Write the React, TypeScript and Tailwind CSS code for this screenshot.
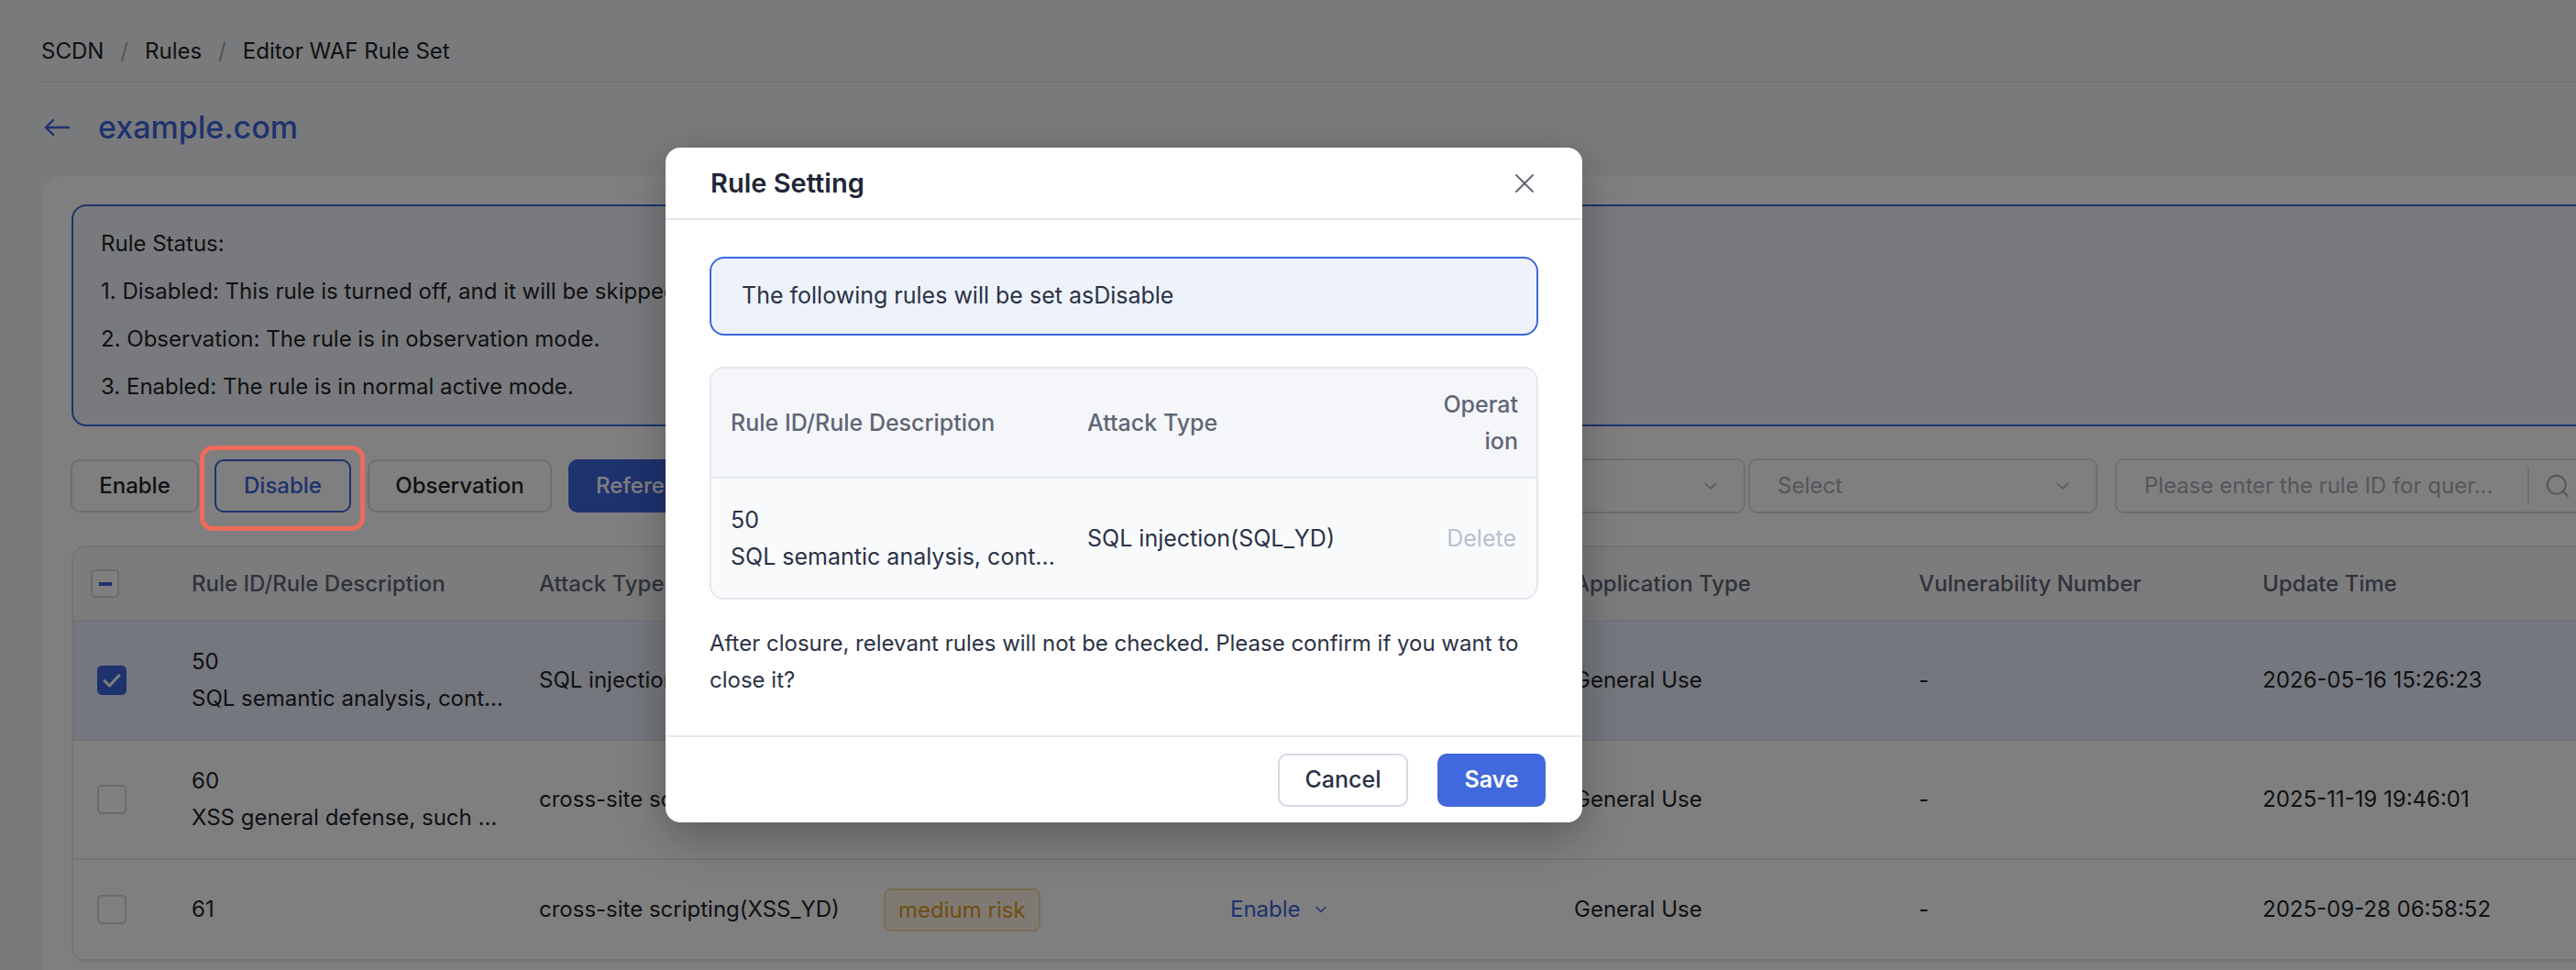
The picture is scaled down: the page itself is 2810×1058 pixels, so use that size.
import React from "react";
import { ChevronDown, Search, X } from "lucide-react";

function Checkbox({ state }: { state: "on" | "off" | "mixed" }) {
  if (state === "on") {
    return (
      <div className="w-[32px] h-[32px] rounded-[5px] bg-[#3d64dd] flex items-center justify-center">
        <svg width="20" height="16" viewBox="0 0 20 16" fill="none">
          <path d="M2 8.5 L7.5 14 L18 2.5" stroke="white" strokeWidth="3" strokeLinecap="round" strokeLinejoin="round" />
        </svg>
      </div>
    );
  }
  if (state === "mixed") {
    return (
      <div className="w-[31px] h-[31px] rounded-[5px] border-2 border-[#d3d6dd] bg-white flex items-center justify-center">
        <div className="w-[14px] h-[4px] bg-[#3d64dd]" />
      </div>
    );
  }
  return <div className="w-[32px] h-[32px] rounded-[5px] border-2 border-[#d3d6dd] bg-white" />;
}

const cols = [
  "w-[379px]",
  "w-[376px]",
  "w-[378px]",
  "w-[375px]",
  "w-[376px]",
  "w-[375px]",
  "w-[380px]",
];

export default function App() {
  return (
    <div className="relative w-[2810px] h-[1058px] overflow-hidden bg-[#f3f4f7] font-['Inter','Noto_Sans',sans-serif] text-[#1f2329]">
      {/* Breadcrumb */}
      <div className="ml-[45px] pt-[40px] pb-[16px] border-b-2 border-[#e0e2e7]">
        <div className="flex items-center h-[32px] text-[24px] leading-[32px] text-[#1f2329]">
          <span>SCDN</span>
          <span className="mx-[18px] text-[#a3a8b3]">/</span>
          <span>Rules</span>
          <span className="mx-[18px] text-[#a3a8b3]">/</span>
          <span>Editor WAF Rule Set</span>
        </div>
      </div>

      {/* Title */}
      <div className="ml-[48px] mt-[25px] h-[48px] flex items-center gap-[31px]">
        <svg width="28" height="20" viewBox="0 0 28 20" fill="none">
          <path d="M27 10 H2 M10 2 L2 10 L10 18" stroke="#3d64dd" strokeWidth="2.4" strokeLinecap="round" strokeLinejoin="round" />
        </svg>
        <span className="text-[34px] leading-[48px] font-medium text-[#3d64dd]">example.com</span>
      </div>

      {/* Card */}
      <div className="ml-[45px] mt-[29px] w-[2838px] h-[900px] bg-white rounded-[24px] pt-[31px] px-[33px]">
        <div className="border-2 border-[#3d64dd] bg-[#f3f5fb] rounded-[16px] px-[30px] py-[15px] text-[24px] leading-[52px] text-[#1f2329]">
          <div>Rule Status:</div>
          <div>1. Disabled: This rule is turned off, and it will be skipped when the request is checked.</div>
          <div>2. Observation: The rule is in observation mode.</div>
          <div>3. Enabled: The rule is in normal active mode.</div>
        </div>

        {/* Toolbar */}
        <div className="mt-[36px] flex items-center h-[58px]">
          <button className="-ml-[1px] w-[140px] h-[58px] rounded-[10px] border-2 border-[#d9dce3] bg-white text-[24px] font-medium text-[#1f2329]">Enable</button>
          <button className="ml-[17px] w-[149px] h-[58px] rounded-[10px] border-2 border-[#3d64dd] bg-white text-[24px] font-medium text-[#3d64dd]">Disable</button>
          <button className="ml-[18px] w-[201px] h-[58px] rounded-[10px] border-2 border-[#d9dce3] bg-white text-[24px] font-medium text-[#1f2329]">Observation</button>
          <button className="ml-[18px] w-[300px] h-[58px] rounded-[10px] bg-[#3d64dd] text-[24px] font-medium text-white text-left pl-[30px]">Reference Rules</button>
          <div className="flex-1" />
          <div className="flex items-center">
            <div className="w-[381px] h-[60px] rounded-[10px] border-2 border-[#d9dce3] bg-white flex items-center justify-between pl-[30px] pr-[24px] text-[24px] text-[#a8adb8]">
              <span>Select</span>
              <ChevronDown size={24} strokeWidth={1.5} className="text-[#a8adb8]" />
            </div>
            <div className="ml-[3px] w-[381px] h-[60px] rounded-[10px] border-2 border-[#d9dce3] bg-white flex items-center justify-between pl-[30px] pr-[24px] text-[24px] text-[#a8adb8]">
              <span>Select</span>
              <ChevronDown size={24} strokeWidth={1.5} className="text-[#a8adb8]" />
            </div>
            <div className="ml-[19px] w-[543px] h-[60px] rounded-[10px] border-2 border-[#d9dce3] bg-white flex items-center pl-[30px] text-[24px] text-[#a8adb8]">
              <span className="w-[410px] truncate">Please enter the rule ID for quer…</span>
              <div className="w-[2px] h-[40px] bg-[#d9dce3] ml-[8px]" />
              <Search size={30} strokeWidth={1.5} className="ml-[16px] text-[#a8adb8]" />
            </div>
          </div>
        </div>

        {/* Table */}
        <div className="mt-[36px] border-2 border-[#e6e8ec] rounded-[16px] overflow-hidden text-[24px]">
          <div className="flex h-[81px] border-b-2 border-[#e6e8ec] bg-[#f8f9fb] items-center font-medium text-[#5f6675]">
            <div className="w-[108px] pl-[19px] flex items-center"><Checkbox state="mixed" /></div>
            <div className={`${cols[0]} pl-[21px]`}>Rule ID/Rule Description</div>
            <div className={`${cols[1]} pl-[21px]`}>Attack Type</div>
            <div className={`${cols[2]} pl-[21px]`}>Risk Level</div>
            <div className={`${cols[3]} pl-[21px]`}>Status</div>
            <div className={`${cols[4]} pl-[21px]`}>Application Type</div>
            <div className={`${cols[5]} pl-[21px]`}>Vulnerability Number</div>
            <div className={`${cols[6]} pl-[21px]`}>Update Time</div>
          </div>

          {/* Row 1 */}
          <div className="flex h-[130px] border-b-2 border-[#e6e8ec] bg-[#e9eefa] items-center leading-[40px]">
            <div className="w-[108px] pl-[26px] flex items-center"><Checkbox state="on" /></div>
            <div className={`${cols[0]} pl-[21px] pr-[12px]`}>
              <div>50</div>
              <div className="truncate">SQL semantic analysis, cont…</div>
            </div>
            <div className={`${cols[1]} pl-[21px]`}>SQL injection(SQL_YD)</div>
            <div className={`${cols[2]} pl-[21px]`}>
              <span className="inline-block px-[14px] h-[47px] leading-[43px] rounded-[8px] border-2 border-[#f8c9c4] bg-[#fdeeed] text-[#e0523f]">high risk</span>
            </div>
            <div className={`${cols[3]} pl-[21px] flex items-center gap-[12px] text-[#3d64dd]`}>Enable <ChevronDown size={20} strokeWidth={1.5} /></div>
            <div className={`${cols[4]} pl-[21px]`}>General Use</div>
            <div className={`${cols[5]} pl-[21px]`}>-</div>
            <div className={`${cols[6]} pl-[21px]`}>2026-05-16 15:26:23</div>
          </div>

          {/* Row 2 */}
          <div className="flex h-[130px] border-b-2 border-[#e6e8ec] bg-white items-center leading-[40px]">
            <div className="w-[108px] pl-[26px] flex items-center"><Checkbox state="off" /></div>
            <div className={`${cols[0]} pl-[21px] pr-[12px]`}>
              <div>60</div>
              <div className="truncate">XSS general defense, such …</div>
            </div>
            <div className={`${cols[1]} pl-[21px]`}>cross-site scripting(XSS_YD)</div>
            <div className={`${cols[2]} pl-[21px]`}>
              <span className="inline-block px-[14px] h-[47px] leading-[43px] rounded-[8px] border-2 border-[#f5dcae] bg-[#fdf5e6] text-[#e39a22]">medium risk</span>
            </div>
            <div className={`${cols[3]} pl-[21px] flex items-center gap-[12px] text-[#3d64dd]`}>Enable <ChevronDown size={20} strokeWidth={1.5} /></div>
            <div className={`${cols[4]} pl-[21px]`}>General Use</div>
            <div className={`${cols[5]} pl-[21px]`}>-</div>
            <div className={`${cols[6]} pl-[21px]`}>2025-11-19 19:46:01</div>
          </div>

          {/* Row 3 */}
          <div className="flex h-[110px] border-b-2 border-[#e6e8ec] bg-white items-center leading-[40px]">
            <div className="w-[108px] pl-[26px] flex items-center"><Checkbox state="off" /></div>
            <div className={`${cols[0]} pl-[21px]`}>61</div>
            <div className={`${cols[1]} pl-[21px]`}>cross-site scripting(XSS_YD)</div>
            <div className={`${cols[2]} pl-[21px]`}>
              <span className="inline-block px-[14px] h-[47px] leading-[43px] rounded-[8px] border-2 border-[#f5dcae] bg-[#fdf5e6] text-[#e39a22]">medium risk</span>
            </div>
            <div className={`${cols[3]} pl-[21px] flex items-center gap-[12px] text-[#3d64dd]`}>Enable <ChevronDown size={20} strokeWidth={1.5} /></div>
            <div className={`${cols[4]} pl-[21px]`}>General Use</div>
            <div className={`${cols[5]} pl-[21px]`}>-</div>
            <div className={`${cols[6]} pl-[21px]`}>2025-09-28 06:58:52</div>
          </div>
        </div>
      </div>

      {/* Overlay */}
      <div className="absolute inset-0 bg-black/50 z-10" />

      {/* Modal */}
      <div className="absolute left-[726px] top-[161px] w-[1000px] bg-white rounded-[16px] z-20 shadow-[0_16px_48px_rgba(0,0,0,0.28)] text-[25px] text-[#2b3245]">
        <div className="h-[79px] border-b-2 border-[#e6e8ef] flex items-center justify-between pl-[49px] pr-[45px]">
          <span className="text-[29px] font-semibold text-[#1f2637]">Rule Setting</span>
          <X size={36} strokeWidth={1.2} className="text-[#5a6070]" />
        </div>
        <div className="px-[48px] pt-[40px] pb-[40px]">
          <div className="h-[86px] border-2 border-[#3d66dc] bg-[#eef2fb] rounded-[16px] flex items-center pl-[33px]">
            The following rules will be set asDisable
          </div>
          <div className="mt-[34px] border-2 border-[#e4e7ee] rounded-[16px] overflow-hidden">
            <div className="flex h-[120px] bg-[#f5f6fa] border-b-2 border-[#e4e7ee] items-center text-[#5f6675] font-medium leading-[40px]">
              <div className="w-[389px] pl-[21px]">Rule ID/Rule Description</div>
              <div className="w-[389px] pl-[21px]">Attack Type</div>
              <div className="w-[122px] pr-[20px] flex justify-end">
                <div className="w-[84px] text-right break-all">Operation</div>
              </div>
            </div>
            <div className="flex h-[130px] bg-[#f9fafc] items-center leading-[40px]">
              <div className="w-[389px] pl-[21px] pr-[10px]">
                <div>50</div>
                <div className="truncate">SQL semantic analysis, cont…</div>
              </div>
              <div className="w-[389px] pl-[21px]">SQL injection(SQL_YD)</div>
              <div className="w-[122px] pr-[22px] text-right text-[#b8c0cf]">Delete</div>
            </div>
          </div>
          <div className="mt-[28px] leading-[40px] text-[24px]">
            After closure, relevant rules will not be checked. Please confirm if you want to close it?
          </div>
        </div>
        <div className="border-t-2 border-[#e6e8ef] h-[95px] flex items-center justify-end pr-[40px] gap-[32px]">
          <button className="w-[142px] h-[58px] rounded-[10px] border-2 border-[#d5d9e3] bg-white text-[25px] font-medium text-[#2b3245]">Cancel</button>
          <button className="w-[118px] h-[58px] rounded-[10px] bg-[#4168dc] text-[25px] font-semibold text-white">Save</button>
        </div>
      </div>

      {/* Annotation highlight */}
      <div className="absolute left-[218px] top-[486px] w-[180px] h-[93px] border-[5px] border-[#ee6a5a] rounded-[14px] z-30" />
    </div>
  );
}
